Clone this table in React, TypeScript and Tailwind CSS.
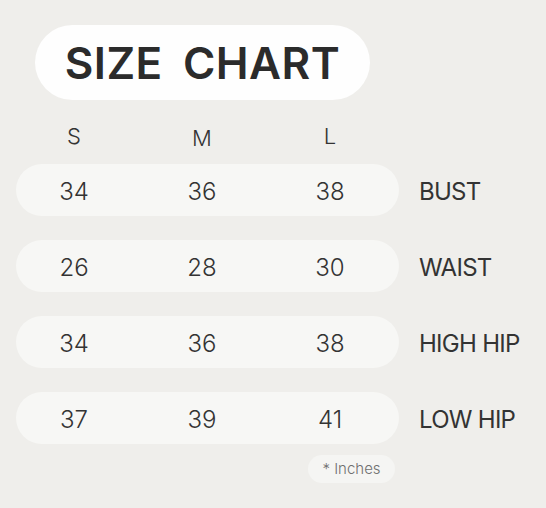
const rows = [
  { values: ["34", "36", "38"], label: "BUST" },
  { values: ["26", "28", "30"], label: "WAIST" },
  { values: ["34", "36", "38"], label: "HIGH HIP" },
  { values: ["37", "39", "41"], label: "LOW HIP" }
]

export default function App() {
  return (
    <div
      className="h-[508px] w-[546px] bg-[#efeeeb] pt-[25px] text-[#2e2e2e]"
      style={{ fontFamily: "Inter, 'Noto Sans', sans-serif" }}
    >
      <div className="ml-[35px] flex h-[75px] w-[335px] items-center justify-center rounded-full bg-[#fefefe]">
        <h1 className="text-[44px] font-semibold leading-none tracking-[0.01em] text-[#2b2b2b] [word-spacing:0.2em]">
          SIZE CHART
        </h1>
      </div>

      <div className="ml-[16px] mt-[22px] grid h-[28px] grid-cols-[116px_140px_116px] items-center text-center text-[22px] font-light leading-none text-[#333]">
        <span>S</span>
        <span className="mt-[3px]">M</span>
        <span>L</span>
      </div>

      <div className="mt-[14px] flex flex-col gap-[24px]">
        {rows.map((row) => (
          <div key={row.label} className="flex items-center">
            <div className="ml-[16px] grid h-[52px] w-[383px] grid-cols-[116px_140px_116px] items-center rounded-full bg-[#f7f7f5] pt-[4px] text-center text-[24px] font-light leading-none text-[#333]">
              {row.values.map((v, i) => (
                <span key={i}>{v}</span>
              ))}
            </div>
            <span className="ml-[20px] mt-[4px] text-[24px] font-normal leading-none tracking-[-0.03em] text-[#333]">
              {row.label}
            </span>
          </div>
        ))}
      </div>

      <div className="ml-[308px] mt-[11px] flex h-[28px] w-[87px] items-center justify-center rounded-full bg-[#f5f5f3] text-[15px] font-light text-[#6f6f6f]">
        * Inches
      </div>
    </div>
  )
}
